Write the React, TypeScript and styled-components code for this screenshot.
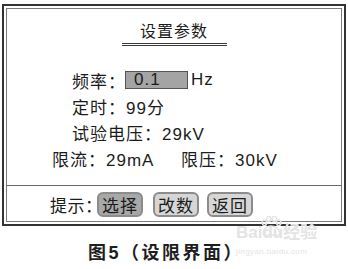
import React from 'react';
import styled, { createGlobalStyle } from 'styled-components';

const GlobalStyle = createGlobalStyle`
    body {
        margin: 0;
        background: #ffffff;
        font-family: "Liberation Sans", "Noto Sans CJK SC", sans-serif;
        color: #1c1c1c;
    }
`;

const Page = styled.div`
    position: relative;
    width: 348px;
    height: 269px;
    overflow: hidden;
    padding-top: 4px;
    box-sizing: border-box;
`;

const Frame = styled.div`
    margin-left: 2px;
    width: 344px;
    box-sizing: border-box;
    border: 2px solid #333333;
    padding: 2px;
`;

const Screen = styled.div`
    height: 214px;
    box-sizing: border-box;
    border: 1px solid #7a7a7a;
    display: flex;
    flex-direction: column;
`;

const Main = styled.div`
    flex: 1;
    padding-top: 13px;
`;

const Title = styled.div`
    width: 105px;
    margin: 0 auto;
    text-align: center;
    font-size: 16px;
    line-height: 20px;
    letter-spacing: 1px;
    padding-bottom: 1px;
    border-bottom: 3px double #3c3c3c;
`;

const Rows = styled.div`
    margin-top: 21px;
    display: flex;
    flex-direction: column;
`;

const Row = styled.div<{ $indent: number }>`
    display: flex;
    align-items: center;
    height: 26px;
    padding-left: ${(p) => p.$indent}px;
    font-size: 17px;
    letter-spacing: 1px;
    white-space: nowrap;
`;

const Cell = styled.span<{ $width?: number }>`
    display: inline-block;
    flex-shrink: 0;
    width: ${(p) => (p.$width ? `${p.$width}px` : 'auto')};
`;

const ValueBox = styled.span`
    display: inline-flex;
    align-items: center;
    width: 63px;
    height: 18px;
    box-sizing: border-box;
    padding-left: 8px;
    background: #a4a4a4;
    border: 1px solid #555555;
    margin-right: 3px;
`;

const Footer = styled.div`
    height: 36px;
    box-sizing: border-box;
    border-top: 1px solid #6a6a6a;
    display: flex;
    align-items: center;
    padding-left: 43px;
    padding-top: 1px;
    font-size: 17px;
    white-space: nowrap;
`;

const Hint = styled.span`
    flex-shrink: 0;
    width: 47px;
    font-feature-settings: "palt";
    letter-spacing: 0.5px;
`;

const Key = styled.span<{ $active?: boolean }>`
    display: inline-flex;
    align-items: center;
    justify-content: center;
    flex-shrink: 0;
    width: 46px;
    height: 25px;
    box-sizing: border-box;
    margin-right: ${(p) => (p.$active ? 10 : 8)}px;
    border: 2px solid #8c8c8c;
    border-radius: 6px;
    background: ${(p) => (p.$active ? '#a8a8a8' : '#d6d6d6')};
    letter-spacing: 1px;
`;

const Caption = styled.div`
    margin-top: 15px;
    text-align: center;
    padding-right: 16px;
    font-size: 18px;
    line-height: 24px;
    font-weight: bold;
    letter-spacing: 2.5px;
    color: #1e1e1e;
`;

const Watermark = styled.div`
    position: absolute;
    left: 236px;
    top: 222px;
    color: #e4e4e4;
    white-space: nowrap;
    pointer-events: none;
`;

const MarkTop = styled.div`
    display: flex;
    align-items: flex-end;
    font-size: 17px;
    font-weight: bold;
    line-height: 22px;
`;

const Du = styled.span`
    position: relative;
`;

const PawMark = styled.svg`
    position: absolute;
    left: -2px;
    top: -6px;
`;

const MarkSite = styled.div`
    font-size: 8px;
    line-height: 10px;
    margin-top: 3px;
    letter-spacing: 0.4px;
`;

const Paw = () => (
    <PawMark width="22" height="20" viewBox="0 0 20 18">
        <g fill="none" stroke="#e4e4e4" strokeWidth="1.3">
            <ellipse cx="4" cy="6" rx="2" ry="2.6" />
            <ellipse cx="8" cy="2.5" rx="2" ry="2.3" />
            <ellipse cx="13" cy="2.5" rx="2" ry="2.3" />
            <ellipse cx="17" cy="6" rx="2" ry="2.6" />
            <path d="M3 16 C3 11 7 9 10 9 C13 9 18 11 18 16 C18 18 14 18 10 17 C6 18 3 18 3 16 Z" />
        </g>
    </PawMark>
);

const App = () => (
    <>
        <GlobalStyle />
        <Page>
            <Frame>
                <Screen>
                    <Main>
                        <Title>设置参数</Title>
                        <Rows>
                            <Row $indent={65}>
                                <Cell $width={53}>频率：</Cell>
                                <ValueBox>0.1</ValueBox>
                                Hz
                            </Row>
                            <Row $indent={65}>定时：99分</Row>
                            <Row $indent={65}>试验电压：29kV</Row>
                            <Row $indent={45}>
                                <Cell $width={129}>限流：29mA</Cell>
                                <Cell>限压：30kV</Cell>
                            </Row>
                        </Rows>
                    </Main>
                    <Footer>
                        <Hint>提示：</Hint>
                        <Key $active>选择</Key>
                        <Key>改数</Key>
                        <Key>返回</Key>
                    </Footer>
                </Screen>
            </Frame>
            <Caption>图5（设限界面）</Caption>
            <Watermark>
                <MarkTop>
                    Bai
                    <Du>
                        <Paw />
                        du
                    </Du>
                    经验
                </MarkTop>
                <MarkSite>jingyan.baidu.com</MarkSite>
            </Watermark>
        </Page>
    </>
);

export default App;
